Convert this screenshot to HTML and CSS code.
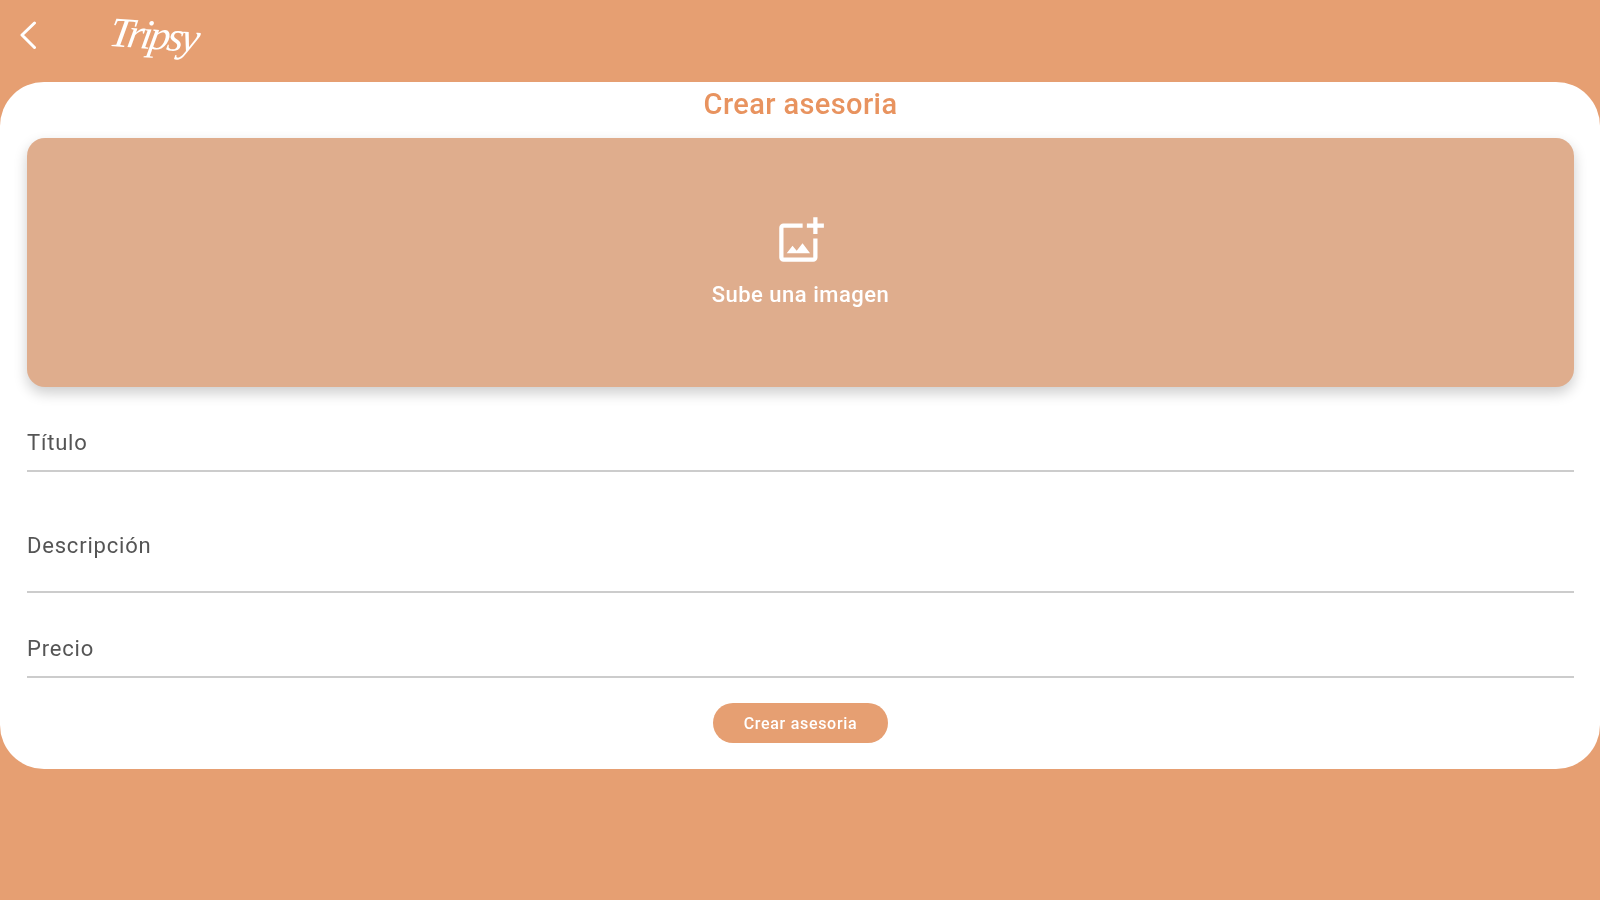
FILE: index.html
```html
<!DOCTYPE html>
<html lang="es">
<head>
    <meta charset="UTF-8">
    <meta name="viewport" content="width=device-width, initial-scale=1.0">
    <title>Crear asesoria - Tripsy</title>
    <link rel="stylesheet" href="styles.css">
</head>
<body>
    <div class="navbar">
        <a href="#" class="back-btn" title="Volver">
            <svg width="18" height="30" viewBox="0 0 18 30">
                <polyline points="15.5,3 3,15 15.5,27.5" fill="none" stroke="#fff" stroke-width="3" stroke-linecap="round" stroke-linejoin="round"/>
            </svg>
        </a>
        <span class="logo">Tripsy</span>
    </div>

    <div class="card">
        <h1 class="card-title">Crear asesoria</h1>

        <div class="upload-box">
            <svg class="upload-icon" viewBox="0 0 24 24">
                <path d="M18 20H4V6h9V4H4c-1.1 0-2 .9-2 2v14c0 1.1.9 2 2 2h14c1.1 0 2-.9 2-2v-9h-2v9zm-7.79-3.17l-1.96-2.36L5.5 18h11l-3.54-4.71zM20 4V1h-2v3h-3c.01.01 0 2 0 2h3v2.99c.01.01 2 0 2 0V6h3V4h-3z"/>
            </svg>
            <span class="upload-label">Sube una imagen</span>
        </div>

        <div class="field field-title">Título</div>
        <div class="field field-description">Descripción</div>
        <div class="field field-price">Precio</div>

        <div class="actions">
            <button class="submit-btn">Crear asesoria</button>
        </div>
    </div>
</body>
</html>
```

FILE: styles.css
```css
body {
    margin: 0;
    height: 900px;
    overflow: hidden;
    font-family: Roboto, Arial, sans-serif;
    background-color: #e69f72;
}
.navbar {
    height: 82px;
    display: flex;
    align-items: center;
    padding-left: 19px;
    box-sizing: border-box;
    filter: blur(0.6px);
}
.back-btn {
    display: flex;
    width: 91px;
    margin-top: -12px;
}
.logo {
    margin-top: -12px;
    color: white;
    font-family: "Liberation Serif", serif;
    font-style: italic;
    font-size: 42px;
    letter-spacing: -3px;
    transform: rotate(4deg) skewX(-6deg);
}
.card {
    background: white;
    border-radius: 44px;
    padding: 0 26px 26px 27px;
    filter: blur(0.6px);
}
.card-title {
    margin: 0 0 12px;
    color: #e8935f;
    font-size: 29px;
    font-weight: 500;
    letter-spacing: 0.4px;
    line-height: 44px;
    text-align: center;
}
.upload-box {
    height: 249px;
    box-sizing: border-box;
    padding-bottom: 2px;
    background: #dfad8d;
    border-radius: 18px;
    box-shadow: 0 6px 14px rgba(0,0,0,0.2);
    display: flex;
    flex-direction: column;
    align-items: center;
    justify-content: center;
    gap: 16px;
}
.upload-icon {
    width: 51px;
    height: 51px;
    fill: white;
}
.upload-label {
    color: white;
    font-size: 22px;
    font-weight: 500;
    letter-spacing: 0.5px;
    line-height: 26px;
}
.field {
    color: #555;
    font-size: 22px;
    letter-spacing: 0.8px;
    line-height: 26px;
    border-bottom: 2px solid #ccc;
    padding-bottom: 14px;
}
.field-title {
    margin-top: 43px;
}
.field-description {
    margin-top: 61px;
    padding-bottom: 32px;
}
.field-price {
    margin-top: 43px;
}
.actions {
    display: flex;
    justify-content: center;
    margin-top: 25px;
}
.submit-btn {
    width: 175px;
    height: 40px;
    background-color: #e69f72;
    color: white;
    border: none;
    border-radius: 20px;
    font-family: Roboto, Arial, sans-serif;
    font-size: 16px;
    font-weight: 500;
    letter-spacing: 0.7px;
    cursor: pointer;
}
```
